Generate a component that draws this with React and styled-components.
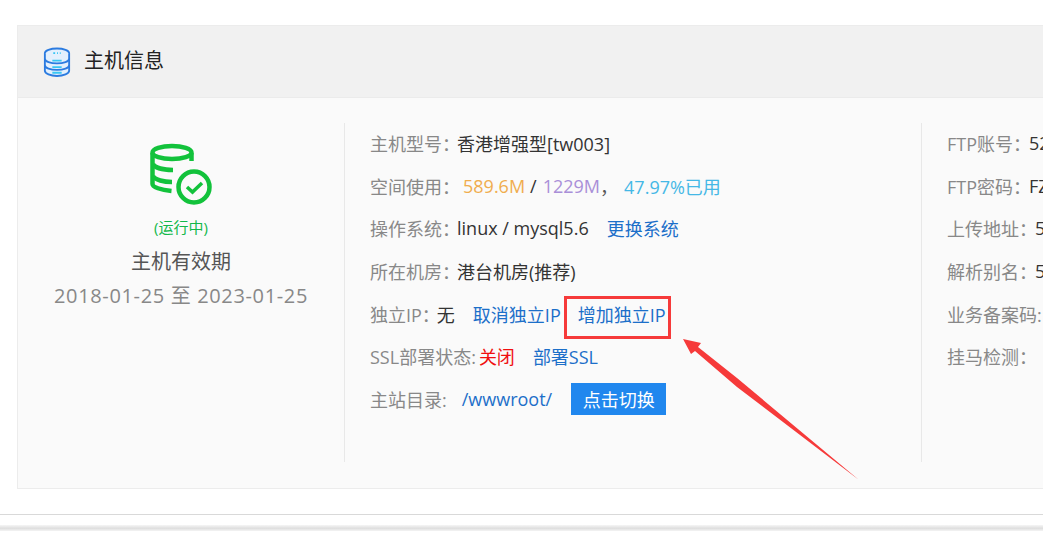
import React from "react";
import styled, { createGlobalStyle } from "styled-components";

const Global = createGlobalStyle`
  html, body { margin: 0; padding: 0; background: #fff; overflow: hidden; }
  body { font-family: "Open Sans", "Noto Sans CJK SC", sans-serif; }
`;

const Page = styled.div`
  position: relative;
  width: 1043px;
  height: 537px;
  overflow: hidden;
  padding-top: 25px;
  box-sizing: border-box;
`;

const Card = styled.section`
  margin-left: 17px;
  width: 1100px;
  height: 464px;
  box-sizing: border-box;
  border: 1px solid #ececec;
  background: #fafafa;
`;

const Header = styled.header`
  height: 72px;
  box-sizing: border-box;
  background: #f1f1f1;
  border-bottom: 1px solid #ebebeb;
  display: flex;
  align-items: center;
  padding: 0 0 0 25px;
  gap: 13px;
`;

const Title = styled.h2`
  margin: 0 0 2px;
  font-size: 20px;
  font-weight: 400;
  color: #222;
  line-height: 28px;
`;

const Body = styled.div`
  display: flex;
  padding-top: 25px;
`;

const Summary = styled.div`
  width: 326px;
  height: 339px;
  flex: none;
  box-sizing: border-box;
  display: flex;
  flex-direction: column;
  align-items: center;
  padding-top: 20px;
`;

const StatusText = styled.div`
  margin-top: 12px;
  font-size: 15px;
  line-height: 20px;
  color: #12b84a;
`;

const Validity = styled.div`
  margin-top: 11px;
  font-size: 20px;
  line-height: 28px;
  color: #555;
`;

const Dates = styled.div`
  margin-top: 6px;
  font-size: 20px;
  line-height: 28px;
  letter-spacing: 0.65px;
  color: #888;
`;

const InfoColumn = styled.div`
  flex: none;
  width: ${(p) => p.$width}px;
  height: 339px;
  box-sizing: border-box;
  border-left: 1px solid #e8e8e8;
  padding: 0 0 0 25px;
  overflow: hidden;
`;

const Row = styled.div`
  height: 42.6px;
  box-sizing: border-box;
  padding-bottom: 2px;
  display: flex;
  align-items: center;
  font-size: 18px;
  color: #333;
  white-space: nowrap;
`;

const Label = styled.span`
  flex: none;
  color: #888;
`;

const Colon = styled.span`
  font-feature-settings: "halt";
`;

const Value = styled.span`
  color: ${(p) => p.$color || "#333"};
  margin-left: ${(p) => p.$left ?? 0}px;
`;

const Action = styled.a`
  color: #1c6fc9;
  margin-left: ${(p) => p.$left ?? 0}px;
  text-decoration: none;
`;

const SwitchButton = styled.button`
  margin-left: 19px;
  width: 95px;
  height: 32px;
  border: 0;
  padding: 0;
  background: #2087ee;
  color: #fff;
  font: inherit;
`;

const Divider = styled.div`
  margin-top: 25px;
  height: 1px;
  background: #d9d9d9;
`;

const Shadow = styled.div`
  margin-top: 10px;
  height: 6px;
  background: linear-gradient(#f6f6f6, #dedede 55%, #f4f4f4);
`;

const Highlight = styled.div`
  position: absolute;
  left: 564px;
  top: 296px;
  width: 107px;
  height: 43px;
  box-sizing: border-box;
  border: 3px solid #f63a3a;
`;

const Arrow = styled.svg`
  position: absolute;
  left: 0;
  top: 0;
  pointer-events: none;
`;

const HeaderIcon = () => (
  <svg width="28" height="32" viewBox="0 0 30 33" fill="none">
    <ellipse cx="15" cy="7" rx="13" ry="5" fill="#e3f0fd" stroke="#2b7be0" strokeWidth="2" />
    <path d="M2 7v19c0 3 6 5.500 13 5.500S28 29 28 26V7" fill="#e3f0fd" stroke="#2b7be0" strokeWidth="2" />
    <path d="M2 13c0 3 6 5 13 5s13-2 13-5M2 20c0 3 6 5 13 5s13-2 13-5" stroke="#2b7be0" strokeWidth="2" />
    <path d="M11 7h2M15 7h1M18 7h1" stroke="#38c6f4" strokeWidth="2" />
    <path d="M10 15h10M10 22h10M10 28h10" stroke="#38c6f4" strokeWidth="2" />
  </svg>
);

const StatusIcon = () => (
  <svg width="62" height="62" viewBox="0 0 62 62" fill="none" stroke="#12c23b">
    <ellipse cx="22" cy="9.500" rx="19.500" ry="6.500" strokeWidth="4.500" />
    <path d="M2.500 10v31c0 3 8 6 19 7M41.500 10v8" strokeWidth="4.500" />
    <path d="M3 21c2 4 11 6 20 6M3 33c2 4 11 6 19 6" strokeWidth="4.500" />
    <circle cx="44" cy="44" r="15.500" strokeWidth="4.500" />
    <path d="M37 44l5.500 5L52 40" strokeWidth="3.500" />
  </svg>
);

const Field = ({ children }) => (
  <Label>
    {children}
    <Colon>：</Colon>
  </Label>
);

export default function App() {
  return (
    <Page>
      <Global />
      <Card>
        <Header>
          <HeaderIcon />
          <Title>主机信息</Title>
        </Header>
        <Body>
          <Summary>
            <StatusIcon />
            <StatusText>(运行中)</StatusText>
            <Validity>主机有效期</Validity>
            <Dates>2018-01-25 至 2023-01-25</Dates>
          </Summary>
          <InfoColumn $width={577}>
            <Row><Field>主机型号</Field><Value $left={6}>香港增强型[tw003]</Value></Row>
            <Row>
              <Field>空间使用</Field>
              <Value $left={12} $color="#f0ad4e">589.6M</Value>
              <Value $left={5}>/</Value>
              <Value $left={6} $color="#a98fd8">1229M</Value>
              <Value $color="#555">，</Value>
              <Value $left={6} $color="#45b8e6">47.97%已用</Value>
            </Row>
            <Row>
              <Field>操作系统</Field><Value $left={6}>linux / mysql5.6</Value>
              <Action $left={18}>更换系统</Action>
            </Row>
            <Row><Field>所在机房</Field><Value $left={6}>港台机房(推荐)</Value></Row>
            <Row>
              <Field>独立IP</Field><Value $left={6}>无</Value>
              <Action $left={18}>取消独立IP</Action>
              <Action $left={17}>增加独立IP</Action>
            </Row>
            <Row>
              <Label>SSL部署状态:</Label><Value $left={3} $color="#f01010">关闭</Value>
              <Action $left={18}>部署SSL</Action>
            </Row>
            <Row>
              <Label>主站目录:</Label><Value $left={15} $color="#1c6fc9">/wwwroot/</Value>
              <SwitchButton>点击切换</SwitchButton>
            </Row>
          </InfoColumn>
          <InfoColumn $width={197}>
            <Row><Field>FTP账号</Field><Value $left={7}>52</Value></Row>
            <Row><Field>FTP密码</Field><Value $left={7}>FZ</Value></Row>
            <Row><Field>上传地址</Field><Value $left={7}>5</Value></Row>
            <Row><Field>解析别名</Field><Value $left={7}>5</Value></Row>
            <Row><Label>业务备案码:</Label></Row>
            <Row><Field>挂马检测</Field></Row>
          </InfoColumn>
        </Body>
      </Card>
      <Divider />
      <Shadow />
      <Highlight />
      <Arrow width="1043" height="537" viewBox="0 0 1043 537">
        <polygon points="683,339 701,343 698,347 737,378 859,480 737,387 695,351 691,354" fill="#f63a3a" />
      </Arrow>
    </Page>
  );
}
